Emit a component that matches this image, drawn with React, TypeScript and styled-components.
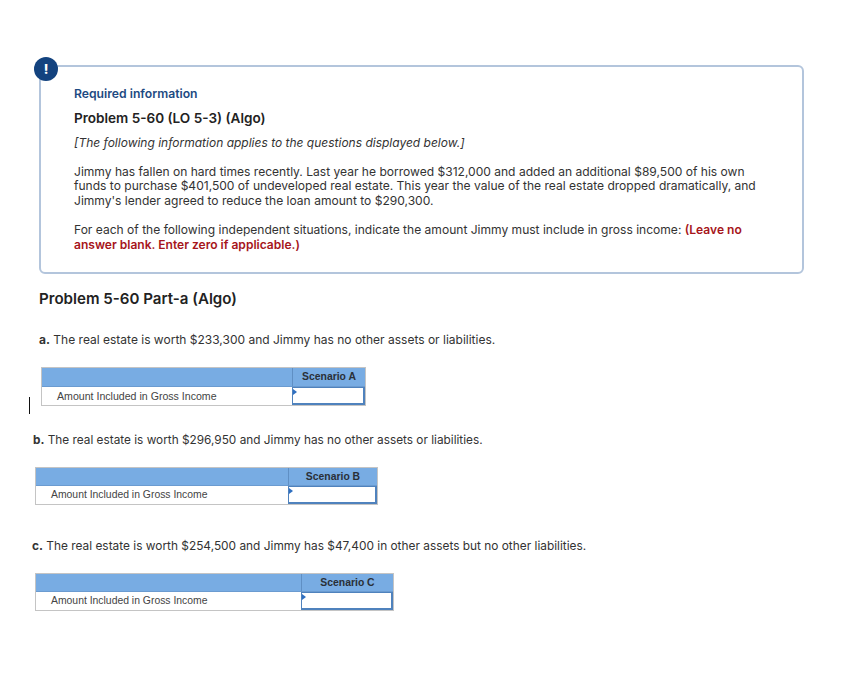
import React from "react";
import styled, { createGlobalStyle } from "styled-components";

const Global = createGlobalStyle`
  html, body { margin: 0; padding: 0; background: #fff; }
  body { font-family: "Inter", "Open Sans", sans-serif; color: #2b2b2b; }
`;

const Page = styled.div`
  position: relative;
  width: 847px;
  height: 683px;
  overflow: hidden;
  padding: 65px 43px 0 39px;
  box-sizing: border-box;
`;

const Card = styled.section`
  position: relative;
  height: 209px;
  box-sizing: border-box;
  border: 2px solid #b3c5dc;
  border-radius: 6px;
  padding: 19px 33px 0 33px;
`;

const Badge = styled.div`
  position: absolute;
  left: -7px;
  top: -10px;
  width: 24px;
  height: 24px;
  border-radius: 50%;
  background: #13437f;
  color: #fff;
  font: 800 13px/24px "Inter", sans-serif;
  text-align: center;
`;

const Eyebrow = styled.div`
  font-size: 12.2px;
  line-height: 16px;
  font-weight: 600;
  color: #1d4a82;
`;

const CardTitle = styled.h2`
  margin: 7px 0 0;
  font-size: 13.55px;
  line-height: 18px;
  font-weight: 600;
  color: #222;
`;

const Note = styled.p`
  margin: 7px 0 0;
  font-size: 12px;
  line-height: 18px;
  font-style: italic;
  color: #333;
`;

const Para = styled.p<{ $gap: number; $line: number }>`
  margin: ${(p) => p.$gap}px 0 0;
  font-size: 12.05px;
  line-height: ${(p) => p.$line}px;
  color: #333;
`;

const Warn = styled.strong`
  color: #a6151b;
  font-weight: 600;
`;

const PartTitle = styled.h3`
  margin: 15px 0 0;
  font-size: 15.1px;
  line-height: 20px;
  font-weight: 600;
  color: #222;
`;

const Question = styled.p<{ $top: number; $left: number; $size: number }>`
  margin: ${(p) => p.$top}px 0 0 ${(p) => p.$left}px;
  font-size: ${(p) => p.$size}px;
  line-height: 16px;
  color: #333;
  b { font-weight: 700; }
`;

const Table = styled.div<{
  $top: number;
  $left: number;
  $label: number;
  $value: number;
  $size: number;
  $head: number;
}>`
  margin: ${(p) => p.$top}px 0 0 ${(p) => p.$left}px;
  width: ${(p) => p.$label + p.$value}px;
  display: grid;
  grid-template-columns: ${(p) => p.$label}px ${(p) => p.$value}px;
  grid-template-rows: ${(p) => p.$head}px 18px;
  border: 1px solid #c4c4c4;
  box-sizing: content-box;
  font-family: "Liberation Sans", Arial, sans-serif;
  font-size: ${(p) => p.$size}px;
`;

const HeadCell = styled.div`
  background: #78ace3;
  border-bottom: 1px solid #6b9bd0;
  box-sizing: border-box;
`;

const ScenarioCell = styled(HeadCell)`
  border-left: 1px solid #5f8fc4;
  font-size: 10.4px;
  font-weight: 700;
  color: #2a3038;
  text-align: center;
  line-height: 18px;
`;

const LabelCell = styled.div<{ $indent: number }>`
  padding-left: ${(p) => p.$indent}px;
  line-height: 18px;
  color: #444;
`;

const InputCell = styled.div`
  position: relative;
  border: 1px solid #4f82bd;
  border-width: 1px 2px 2px 1px;
  box-sizing: border-box;
  background: #fff;
`;

const Marker = styled.span`
  position: absolute;
  left: 0;
  top: 1px;
  width: 0;
  height: 0;
  border-left: 4px solid #2f6fc0;
  border-top: 3px solid transparent;
  border-bottom: 3px solid transparent;
`;

const Caret = styled.div`
  position: absolute;
  left: 29px;
  top: 397px;
  width: 1px;
  height: 17px;
  background: #111;
`;

const scenarios = [
  { name: "Scenario A", top: 19, left: 2, label: 250, value: 73, indent: 15, size: 10.6, head: 19 },
  { name: "Scenario B", top: 19, left: -4, label: 252, value: 89, indent: 15, size: 10.4, head: 18 },
  { name: "Scenario C", top: 19, left: -4, label: 265, value: 92, indent: 15, size: 10.4, head: 18 },
];

const ScenarioTable = ({ s }: { s: (typeof scenarios)[number] }) => (
  <Table $top={s.top} $left={s.left} $label={s.label} $value={s.value} $size={s.size} $head={s.head}>
    <HeadCell />
    <ScenarioCell>{s.name}</ScenarioCell>
    <LabelCell $indent={s.indent}>Amount Included in Gross Income</LabelCell>
    <InputCell>
      <Marker />
    </InputCell>
  </Table>
);

export default function App() {
  return (
    <Page>
      <Global />
      <Card>
        <Badge>!</Badge>
        <Eyebrow>Required information</Eyebrow>
        <CardTitle>Problem 5-60 (LO 5-3) (Algo)</CardTitle>
        <Note>[The following information applies to the questions displayed below.]</Note>
        <Para $gap={13} $line={14.3}>
          Jimmy has fallen on hard times recently. Last year he borrowed $312,000 and added an additional $89,500 of his own
          <br />
          funds to purchase $401,500 of undeveloped real estate. This year the value of the real estate dropped dramatically, and
          <br />
          Jimmy's lender agreed to reduce the loan amount to $290,300.
        </Para>
        <Para $gap={14} $line={15}>
          For each of the following independent situations, indicate the amount Jimmy must include in gross income:{" "}
          <Warn>
            (Leave no
            <br />
            answer blank. Enter zero if applicable.)
          </Warn>
        </Para>
      </Card>
      <PartTitle>Problem 5-60 Part-a (Algo)</PartTitle>
      <Question $top={23} $left={0} $size={12}>
        <b>a.</b> The real estate is worth $233,300 and Jimmy has no other assets or liabilities.
      </Question>
      <ScenarioTable s={scenarios[0]} />
      <Question $top={26} $left={-6} $size={11.82}>
        <b>b.</b> The real estate is worth $296,950 and Jimmy has no other assets or liabilities.
      </Question>
      <ScenarioTable s={scenarios[1]} />
      <Question $top={33} $left={-7} $size={11.88}>
        <b>c.</b> The real estate is worth $254,500 and Jimmy has $47,400 in other assets but no other liabilities.
      </Question>
      <ScenarioTable s={scenarios[2]} />
      <Caret />
    </Page>
  );
}
